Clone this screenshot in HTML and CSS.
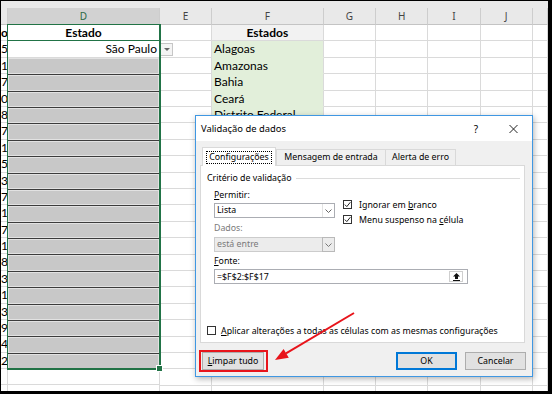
FILE: index.html
```html
<!DOCTYPE html>
<html lang="pt-BR">
<head>
    <meta charset="UTF-8">
    <title>Validação de dados</title>
    <link rel="stylesheet" href="styles.css">
</head>
<body>
    <div class="frame">
        <div class="top-strip"></div>

        <div class="sheet">
            <div class="col col-c">
                <div class="head"></div>
                <div class="cell num bold">o</div>
                <div class="cell num">5</div>
                <div class="cell num">1</div>
                <div class="cell num">7</div>
                <div class="cell num">0</div>
                <div class="cell num">8</div>
                <div class="cell num">7</div>
                <div class="cell num">1</div>
                <div class="cell num">5</div>
                <div class="cell num">3</div>
                <div class="cell num">7</div>
                <div class="cell num">1</div>
                <div class="cell num">7</div>
                <div class="cell num">1</div>
                <div class="cell num">8</div>
                <div class="cell num">3</div>
                <div class="cell num">1</div>
                <div class="cell num">3</div>
                <div class="cell num">9</div>
                <div class="cell num">4</div>
                <div class="cell num">2</div>
                <div class="fill"></div>
            </div>

            <div class="col col-d">
                <div class="head selected">D</div>
                <div class="cell bold center title-cell">Estado</div>
                <div class="cell active">São Paulo<span class="dd-button"><span class="dd-caret"></span></span></div>
                <div class="cell gray"></div>
                <div class="cell gray"></div>
                <div class="cell gray"></div>
                <div class="cell gray"></div>
                <div class="cell gray"></div>
                <div class="cell gray"></div>
                <div class="cell gray"></div>
                <div class="cell gray"></div>
                <div class="cell gray"></div>
                <div class="cell gray"></div>
                <div class="cell gray"></div>
                <div class="cell gray"></div>
                <div class="cell gray"></div>
                <div class="cell gray"></div>
                <div class="cell gray"></div>
                <div class="cell gray"></div>
                <div class="cell gray"></div>
                <div class="cell gray"></div>
                <div class="cell gray"></div>
                <div class="fill"></div>
                <div class="selection"><span class="handle"></span></div>
            </div>

            <div class="col col-e">
                <div class="head">E</div>
                <div class="fill"></div>
            </div>

            <div class="col col-f">
                <div class="head">F</div>
                <div class="cell bold center shaded">Estados</div>
                <div class="cell green">Alagoas</div>
                <div class="cell green">Amazonas</div>
                <div class="cell green">Bahia</div>
                <div class="cell green">Ceará</div>
                <div class="cell green">Distrito Federal</div>
                <div class="cell green">Espírito Santo</div>
                <div class="cell green">Goiás</div>
                <div class="cell green">Maranhão</div>
                <div class="cell green">Mato Grosso</div>
                <div class="cell green">Mato Grosso do Sul</div>
                <div class="cell green">Minas Gerais</div>
                <div class="cell green">Pará</div>
                <div class="cell green">Paraíba</div>
                <div class="cell green">Paraná</div>
                <div class="cell green">Pernambuco</div>
                <div class="cell green">Piauí</div>
                <div class="fill"></div>
            </div>

            <div class="col col-g">
                <div class="head">G</div>
                <div class="fill"></div>
            </div>
            <div class="col col-g">
                <div class="head">H</div>
                <div class="fill"></div>
            </div>
            <div class="col col-g">
                <div class="head">I</div>
                <div class="fill"></div>
            </div>
            <div class="col col-g">
                <div class="head">J</div>
                <div class="fill"></div>
            </div>
            <div class="col col-k">
                <div class="head"></div>
                <div class="fill"></div>
            </div>
        </div>

        <div class="dialog">
            <div class="titlebar">
                <span class="title">Validação de dados</span>
                <span class="help">?</span>
                <span class="close">
                    <svg width="9" height="8" viewBox="0 0 9 8"><path d="M0.5 0L8.5 8M8.5 0L0.5 8" stroke="#222" stroke-width="1" fill="none"/></svg>
                </span>
            </div>

            <div class="content">
                <div class="tabs">
                    <div class="tab on"><span class="focus">Configurações</span></div>
                    <div class="tab msg">Mensagem de entrada</div>
                    <div class="tab alert">Alerta de erro</div>
                </div>

                <div class="panel">
                    <div class="legend">Critério de validação</div>

                    <div class="criteria">
                        <div class="upper">
                            <div class="left">
                                <div class="label"><u>P</u>ermitir:</div>
                                <div class="select">
                                    <span class="value">Lista</span>
                                    <span class="arrow"><svg width="7" height="4" viewBox="0 0 7 4"><path d="M0.5 0.5L3.5 3.5L6.5 0.5" stroke="#666" fill="none"/></svg></span>
                                </div>
                                <div class="label disabled">Dados:</div>
                                <div class="select disabled">
                                    <span class="value">está entre</span>
                                    <span class="arrow"><svg width="7" height="4" viewBox="0 0 7 4"><path d="M0.5 0.5L3.5 3.5L6.5 0.5" stroke="#777" fill="none"/></svg></span>
                                </div>
                            </div>
                            <div class="right">
                                <div class="check">
                                    <span class="box"><svg width="7" height="7" viewBox="0 0 7 7"><path d="M0.8 3.6L2.8 5.6L6.4 1.2" stroke="#222" stroke-width="1" fill="none"/></svg></span>
                                    <span>Ignorar em <u>b</u>ranco</span>
                                </div>
                                <div class="check">
                                    <span class="box"><svg width="7" height="7" viewBox="0 0 7 7"><path d="M0.8 3.6L2.8 5.6L6.4 1.2" stroke="#222" stroke-width="1" fill="none"/></svg></span>
                                    <span>Menu suspenso na <u>c</u>élula</span>
                                </div>
                            </div>
                        </div>

                        <div class="label source"><u>F</u>onte:</div>
                        <div class="ref">
                            <span class="ref-text">=$F$2:$F$17</span>
                            <span class="collapse">
                                <svg width="7" height="8" viewBox="0 0 7 8"><path d="M3.5 0L7 3.5H5V6H2V3.5H0Z" fill="#111"/><path d="M0 7.5H7" stroke="#111"/></svg>
                            </span>
                        </div>
                    </div>

                    <div class="check apply">
                        <span class="box"></span>
                        <span><u>A</u>plicar alterações a todas as células com as mesmas configurações</span>
                    </div>
                </div>

                <div class="actions">
                    <span class="mark"><button class="btn clear"><u>L</u>impar tudo</button></span>
                    <button class="btn default">OK</button>
                    <button class="btn cancel">Cancelar</button>
                </div>
            </div>
        </div>

        <svg class="pointer" width="547" height="390" viewBox="0 0 547 390">
            <line x1="353" y1="312" x2="285" y2="352.4" stroke="#e8141b" stroke-width="2"/>
            <polygon points="274,359 287.8,356.7 282.6,348.1" fill="#e8141b"/>
        </svg>
    </div>
</body>
</html>
```

FILE: styles.css
```css
body {
    margin: 0;
    font-family: Lato, "Noto Sans", sans-serif;
    background: #fff;
}

.frame {
    position: relative;
    width: 552px;
    height: 394px;
    box-sizing: border-box;
    border: solid #000;
    border-width: 1px 4px 3px 1px;
    overflow: hidden;
    background: #fff;
}

.top-strip {
    height: 7px;
    background: #e9e9e9;
}

/* spreadsheet */

.sheet {
    display: flex;
    height: 383px;
}

.col {
    display: flex;
    flex-direction: column;
    flex-shrink: 0;
}

.col-c { width: 7px; }
.col-d { width: 152px; position: relative; }
.col-e { width: 52px; }
.col-f { width: 111.7px; }
.col-g { width: 52.3px; }
.col-k { flex: 1; }

.head {
    height: 17px;
    box-sizing: border-box;
    background: #e9e9e9;
    border-right: 1px solid #cdcdcd;
    border-bottom: 1px solid #c4c4c4;
    text-align: center;
    font-family: "Noto Sans", sans-serif;
    font-size: 10px;
    line-height: 16px;
    color: #444;
}

.head.selected {
    background: #d2d2d2;
    color: #2d6a45;
}

.cell {
    height: 16.4px;
    box-sizing: border-box;
    border-right: 1px solid #dadada;
    border-bottom: 1px solid #dadada;
    padding: 0 2px;
    font-size: 12px;
    line-height: 15.4px;
    color: #000;
    white-space: nowrap;
    overflow: hidden;
}

.fill {
    flex: 1;
    border-right: 1px solid #dadada;
    background: repeating-linear-gradient(to bottom, #fff 0 15.4px, #dadada 15.4px 16.4px);
}

.bold { font-weight: bold; }
.center { text-align: center; }

.cell.num {
    padding: 0;
    text-align: right;
}

.title-cell {
    border-bottom-color: #217346;
}

.cell.active {
    position: relative;
    overflow: visible;
    text-align: right;
    padding-right: 2px;
}

.dd-button {
    position: absolute;
    left: calc(100% + 1px);
    top: 2px;
    width: 13px;
    height: 13px;
    box-sizing: border-box;
    border: 1px solid #c6c6c6;
    background: #f4f4f4;
    display: flex;
    align-items: center;
    justify-content: center;
}

.dd-caret {
    border-left: 3px solid transparent;
    border-right: 3px solid transparent;
    border-top: 3px solid #666;
}

.cell.gray {
    background: #c8c8c8;
    border-bottom: none;
    box-shadow: inset 0 0 0 1px #e2e2e2;
}

.cell.gray + .cell.gray {
    border-top: 1px solid #3c3c3c;
}

.cell.shaded { background: #f2f2f2; }

.cell.green {
    background: #e2efda;
    border-bottom-color: #e2efda;
}

.selection {
    position: absolute;
    left: -1px;
    right: -1px;
    top: 16px;
    height: 346px;
    box-sizing: border-box;
    border: 1px solid #217346;
    border-width: 1px 2px 2px 1px;
}

.handle {
    position: absolute;
    right: -4px;
    bottom: -4px;
    width: 5px;
    height: 5px;
    background: #217346;
    border: 1px solid #fff;
}

/* dialog */

.dialog {
    position: absolute;
    left: 194px;
    top: 114px;
    width: 338px;
    height: 262px;
    box-sizing: border-box;
    border: 1px solid #3f97e2;
    background: #f0f0f0;
    box-shadow: 1px 2px 6px rgba(0, 0, 0, 0.3);
    display: flex;
    flex-direction: column;
    font-family: "Noto Sans", sans-serif;
    font-size: 8.8px;
    color: #000;
}

.titlebar {
    display: flex;
    align-items: center;
    flex-shrink: 0;
    height: 25px;
    padding: 0 9px 0 5px;
    background: #fff;
}

.title { font-size: 9.4px; }

.help {
    margin-left: auto;
    width: 14px;
    text-align: center;
    font-size: 10px;
}

.close {
    width: 20px;
    margin-left: 20px;
    display: flex;
    justify-content: center;
}

.content {
    flex: 1;
    display: flex;
    flex-direction: column;
    padding: 6px 7px 0 4px;
}

.tabs {
    display: flex;
    align-items: flex-end;
    height: 18px;
    padding-left: 2px;
}

.tab {
    height: 16px;
    box-sizing: border-box;
    border: 1px solid #d9d9d9;
    border-bottom: none;
    line-height: 15px;
    text-align: center;
    white-space: nowrap;
}

.tab.msg { width: 110px; }
.tab.alert { width: 71px; margin-left: -1px; }

.tab.on {
    position: relative;
    width: 74px;
    height: 19px;
    margin-bottom: -1px;
    background: #fff;
    display: flex;
    align-items: center;
    justify-content: center;
}

.focus {
    border: 1px dotted #000;
    padding: 0 2px;
    line-height: 11px;
}

.panel {
    height: 178px;
    flex-shrink: 0;
    box-sizing: border-box;
    background: #fff;
    border: 1px solid #d9d9d9;
    padding: 6px 4px 5px 6px;
    display: flex;
    flex-direction: column;
}

.legend {
    display: flex;
    align-items: center;
    line-height: 13px;
}

.legend::after {
    content: "";
    flex: 1;
    height: 1px;
    margin-left: 4px;
    background: #dcdcdc;
}

.criteria { padding-left: 7px; }

.upper {
    display: flex;
    gap: 8px;
}

.left { width: 121px; }

.label {
    line-height: 13px;
    margin: 4px 0 1px;
}

.label.source { margin-top: 3px; }

.disabled { color: #7a7a7a; }

.select {
    display: flex;
    height: 15px;
    box-sizing: border-box;
    border: 1px solid #abadb3;
    background: #fff;
}

.select.disabled {
    margin-top: 2px;
    border-color: #cccccc;
    background: #ececec;
}

.value {
    flex: 1;
    padding-left: 2px;
    line-height: 13px;
}

.arrow {
    width: 12px;
    box-sizing: border-box;
    border-left: 1px solid #e3e3e3;
    display: flex;
    align-items: center;
    justify-content: center;
}

.select.disabled .arrow {
    border: 1px solid #b9b9b9;
    margin: -1px -1px -1px 0;
    width: 13px;
}

.right { padding-top: 12px; }

.check {
    display: flex;
    align-items: center;
    gap: 7px;
    height: 15px;
    white-space: nowrap;
}

.box {
    width: 9px;
    height: 9px;
    flex-shrink: 0;
    box-sizing: border-box;
    border: 1px solid #333;
    background: #fff;
    display: flex;
}

.ref {
    display: flex;
    align-items: center;
    width: 254px;
    height: 15px;
    box-sizing: border-box;
    border: 1px solid #abadb3;
    background: #fff;
    padding-left: 2px;
}

.ref-text { flex: 1; }

.collapse {
    width: 14px;
    height: 11px;
    margin-right: 4px;
    box-sizing: border-box;
    border: 1px solid #cfcfcf;
    display: flex;
    align-items: center;
    justify-content: center;
}

.apply {
    margin-top: auto;
    gap: 5px;
    height: 13px;
}

.actions {
    display: flex;
    align-items: center;
    height: 22px;
    margin-top: 7px;
}

.mark {
    display: flex;
    margin-left: -1px;
    padding: 0 2px 0 1px;
    border: 2px solid #e8141b;
}

.btn {
    height: 18px;
    box-sizing: border-box;
    padding: 0;
    border: 1px solid #adadad;
    background: #e1e1e1;
    font: inherit;
    color: #000;
}

.btn.clear { width: 62px; }

.btn.default {
    width: 61px;
    margin-left: auto;
    border-color: #0078d7;
    box-shadow: inset 0 0 0 1px #0078d7;
}

.btn.cancel {
    width: 61px;
    margin-left: 8px;
    margin-right: -1px;
}

.pointer {
    position: absolute;
    left: 0;
    top: 0;
    pointer-events: none;
}
```
